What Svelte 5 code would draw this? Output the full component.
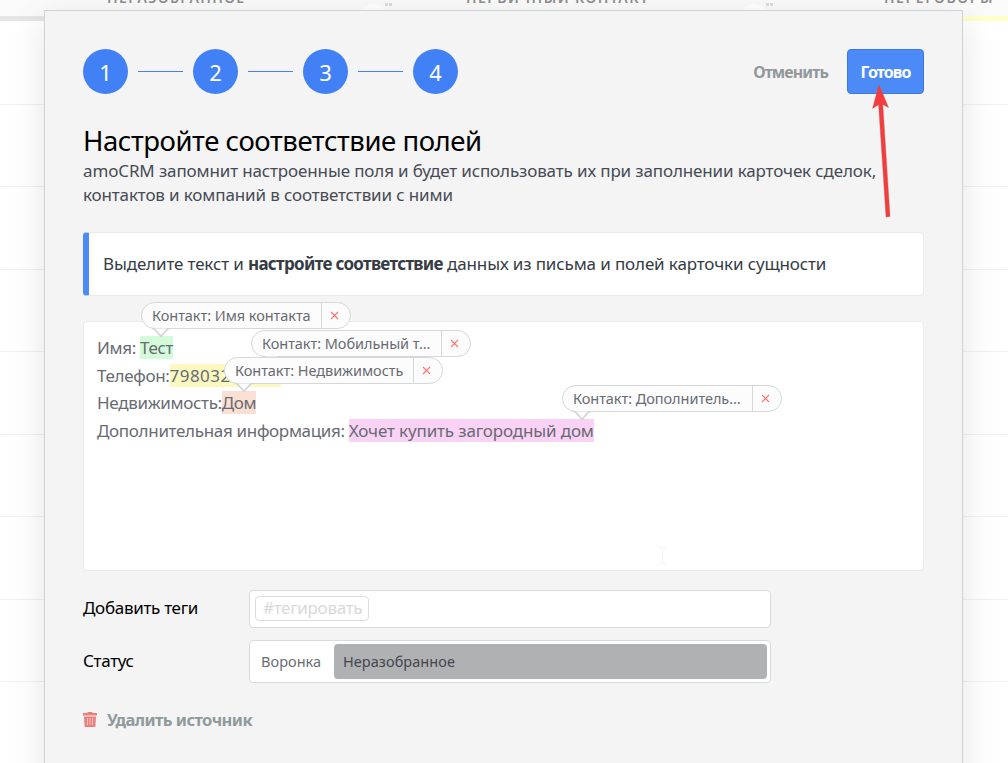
<script>
  const steps = [1, 2, 3, 4];

  const columns = [
    { id: 1, title: 'Неразобранное' },
    { id: 2, title: 'Первичный контакт' },
    { id: 3, title: 'Переговоры' },
  ];

  // Parsed lines of the letter
  const lines = [
    { key: 'name', label: 'Имя:', value: 'Тест' },
    { key: 'phone', label: 'Телефон:', value: '79803212345' },
    { key: 'estate', label: 'Недвижимость:', value: 'Дом' },
    { key: 'extra', label: 'Дополнительная информация:', value: 'Хочет купить загородный дом' },
  ];

  let bubbles = $state([
    { key: 'name', text: 'Контакт: Имя контакта' },
    { key: 'phone', text: 'Контакт: Мобильный т...' },
    { key: 'estate', text: 'Контакт: Недвижимость' },
    { key: 'extra', text: 'Контакт: Дополнитель...' },
  ]);

  function removeBubble(key) {
    bubbles = bubbles.filter((b) => b.key !== key);
  }
</script>

<div class="page">
  <div class="board">
    <div class="board-head">
      {#each columns as column (column.id)}
        <div class="column-title c{column.id}">{column.title}</div>
      {/each}
      <span class="add a1"></span>
      <span class="dots d1"></span>
      <span class="add a2"></span>
      <span class="dots d2"></span>
    </div>
    <div class="board-line"></div>
    <div class="board-body"></div>
  </div>

  <div class="modal">
    <header>
      <div class="steps">
        {#each steps as step}
          {#if step > 1}<span class="dash"></span>{/if}
          <span class="step">{step}</span>
        {/each}
      </div>
      <div class="actions">
        <button class="cancel">Отменить</button>
        <button class="done">Готово</button>
      </div>
    </header>

    <h1>Настройте соответствие полей</h1>
    <p class="description">
      amoCRM запомнит настроенные поля и будет использовать их при заполнении карточек сделок,<br />
      контактов и компаний в соответствии с ними
    </p>

    <div class="info">
      <span>Выделите текст и <b>настройте соответствие</b> данных из письма и полей карточки сущности</span>
    </div>

    <div class="letter">
      {#each lines as line (line.key)}
        <div class="line {line.key}"><span class="label">{line.label}</span><mark>{line.value}</mark></div>
      {/each}
      {#each bubbles as bubble (bubble.key)}
        <div class="bubble b-{bubble.key}">
          <span class="bubble-text">{bubble.text}</span>
          <button class="remove" aria-label="remove" onclick={() => removeBubble(bubble.key)}>
            <svg width="9" height="9" viewBox="0 0 9 9"><path d="M1 1L8 8M8 1L1 8" /></svg>
          </button>
          <svg class="tail" width="20" height="11" viewBox="0 0 20 11"><path d="M1 0.5H3L10 8.5L17 0.5H19" /></svg>
        </div>
      {/each}
      <svg class="caret" width="7" height="17" viewBox="0 0 7 17"><path d="M0 0.5H3M4 0.5H7M3.5 1V16M0 16.5H3M4 16.5H7" /></svg>
    </div>

    <div class="row tags">
      <span class="row-label">Добавить теги</span>
      <div class="field"><span class="tag">#тегировать</span></div>
    </div>
    <div class="row status">
      <span class="row-label">Статус</span>
      <div class="field">
        <span class="funnel">Воронка</span>
        <span class="stage">Неразобранное</span>
      </div>
    </div>

    <button class="delete">
      <svg width="14" height="15" viewBox="0 0 14 15">
        <path class="can" d="M4.5 0H9.5V1H14V3.5H0V1H4.5ZM1 4.5H13L12.3 15H1.7Z" />
        <path class="ribs" d="M4.5 6V13M7 6V13M9.5 6V13" />
      </svg>
      <span>Удалить источник</span>
    </button>
  </div>

  <svg class="arrow" width="20" height="136" viewBox="0 0 20 136">
    <path d="M8 0.5L17.5 23.5L11.8 20.5L19 132.5L15 133L7.6 20.8L1.5 24.5Z" />
  </svg>
</div>

<style>
  :global(body) {
    margin: 0;
    overflow: hidden;
  }

  .page {
    position: relative;
    display: flex;
    width: 1008px;
    height: 763px;
    overflow: hidden;
    background: #fff;
    font-family: 'Noto Sans', sans-serif;
    font-size: 17px;
    color: #363b44;
  }

  button {
    padding: 0;
    border: none;
    background: none;
    font: inherit;
    cursor: pointer;
  }

  /* board under the modal */
  .board {
    position: absolute;
    inset: 0;
  }

  .board-head {
    position: relative;
    height: 16px;
    background: #fafafa;
    overflow: hidden;
  }

  .column-title {
    position: absolute;
    top: -12px;
    font-size: 14px;
    line-height: 20px;
    font-weight: 600;
    text-transform: uppercase;
    white-space: nowrap;
    color: #8e8e8e;
  }

  .c1 { left: 107px; letter-spacing: 1.35px; }
  .c2 { left: 466px; letter-spacing: 1.45px; }
  .c3 { left: 884px; letter-spacing: 1.6px; }

  .add {
    position: absolute;
    top: 4px;
    width: 26px;
    height: 26px;
    border-radius: 50%;
    background: #fff;
  }

  .a1 { left: 360px; }
  .a2 { left: 741px; }

  .dots {
    position: absolute;
    top: 3px;
    width: 3px;
    height: 3px;
    background: #dcdcdc;
    box-shadow: 4px 0 #dcdcdc;
  }

  .d1 { left: 385px; }
  .d2 { left: 766px; }

  .board-line {
    height: 5px;
    background: linear-gradient(90deg, #e5e5e5 500px, #ffffcc 500px);
  }

  .board-body {
    height: 742px;
    background: repeating-linear-gradient(#fff 0 81.5px, #f0f2f2 81.5px 82.5px);
    background-position: 0 1px;
  }

  .modal {
    position: relative;
    box-sizing: border-box;
    flex: none;
    width: 919px;
    height: 800px;
    margin: 10px 0 0 44px;
    padding: 38px;
    border: 1px solid #d0d3d4;
    background: #f4f4f4;
    box-shadow: 0 10px 34px rgba(0, 0, 0, 0.11);
  }

  header {
    display: flex;
    justify-content: space-between;
    height: 45px;
  }

  .steps {
    display: flex;
    align-items: center;
    gap: 10px;
  }

  .step {
    box-sizing: border-box;
    width: 45px;
    height: 45px;
    padding-top: 1px;
    border-radius: 50%;
    background: #4281f5;
    color: #fff;
    font-size: 22px;
    line-height: 45px;
    text-align: center;
  }

  .dash {
    width: 45px;
    height: 1px;
    background: #4281f5;
  }

  .actions {
    display: flex;
    gap: 19px;
  }

  .actions button {
    font-size: 16px;
    font-weight: 700;
    letter-spacing: -0.9px;
  }

  .cancel {
    color: #92989b;
  }

  .actions .done {
    width: 77px;
    height: 45px;
    border: 1px solid #3c79e2;
    border-radius: 4px;
    background: #4c8bf7;
    color: #fff;
  }

  h1 {
    margin: 28px 0 1px;
    font-size: 27.5px;
    line-height: 37px;
    height: 36px;
    font-weight: 400;
    letter-spacing: -0.44px;
    color: #000;
  }

  .description {
    margin: 0;
    line-height: 24px;
    letter-spacing: -0.135px;
    white-space: nowrap;
    color: #474b54;
  }

  .info {
    display: flex;
    align-items: center;
    box-sizing: border-box;
    height: 64px;
    margin-top: 25px;
    padding: 0 0 1px 14px;
    border: 1px solid #e8eaeb;
    border-left: 6px solid #4c8bf7;
    border-radius: 4px;
    background: #fff;
    letter-spacing: -0.13px;
    white-space: nowrap;
  }

  .info b {
    font-weight: 700;
    letter-spacing: -0.69px;
  }

  .letter {
    position: relative;
    box-sizing: border-box;
    height: 250px;
    margin-top: 25px;
    padding: 12px 13px;
    border: 1px solid #e8eaeb;
    border-radius: 4px;
    background: #fff;
    color: #686b72;
  }

  .line {
    line-height: 27.5px;
    white-space: nowrap;
    letter-spacing: -0.32px;
  }

  mark {
    color: inherit;
  }

  .name .label { margin-right: 4px; }
  .extra .label { margin-right: 4px; }
  .name mark { background: #d3fbda; }
  .phone mark { background: #fbf8c0; letter-spacing: 0.45px; }
  .estate mark { background: #fbdfd3; }
  .extra mark { background: #fad2f5; letter-spacing: -0.14px; }

  .bubble {
    position: absolute;
    display: flex;
    box-sizing: border-box;
    width: 220px;
    height: 27px;
    border: 1px solid #d5d7d8;
    border-radius: 14px;
    background: #fcfcfc;
    font-size: 14.5px;
    line-height: 25px;
    letter-spacing: -0.05px;
    white-space: nowrap;
  }

  .b-name { left: 57px; top: -20px; width: 210px; }
  .b-phone { left: 167px; top: 8px; }
  .b-estate { left: 140px; top: 35px; width: 219px; }
  .b-extra { left: 478px; top: 63px; }

  .bubble-text {
    flex: 1;
    padding-left: 10px;
  }

  .remove {
    display: flex;
    align-items: center;
    width: 29px;
    border-left: 1px solid #d5d7d8;
    padding-left: 8px;
  }

  .remove path {
    stroke: #fa7570;
    stroke-width: 1.1;
  }

  .tail {
    position: absolute;
    left: 9px;
    top: 25px;
  }

  .tail path {
    fill: #fcfcfc;
    stroke: #d3d5d6;
    stroke-width: 1.8;
  }

  .caret {
    position: absolute;
    left: 575px;
    top: 225px;
  }

  .caret path {
    fill: none;
    stroke: #f0f0f0;
  }

  .row {
    display: flex;
    align-items: center;
    color: #000;
    letter-spacing: -0.3px;
  }

  .row-label {
    width: 166px;
    padding-bottom: 3px;
  }

  .field {
    display: flex;
    align-items: center;
    box-sizing: border-box;
    width: 522px;
    border: 1px solid #d8dadb;
    border-radius: 4px;
    background: #fff;
  }

  .tags {
    margin-top: 19px;
  }

  .tags .field {
    height: 38px;
    padding: 0 0 1px 5px;
  }

  .tag {
    box-sizing: border-box;
    width: 114px;
    height: 25px;
    padding-left: 7px;
    border: 1px solid #dcdee0;
    border-radius: 4px;
    line-height: 22px;
    color: #d8dadb;
  }

  .status {
    margin-top: 12px;
  }

  .status .row-label {
    padding-bottom: 2px;
  }

  .status .field {
    height: 43px;
    padding-right: 3px;
    font-size: 14.5px;
    letter-spacing: 0.05px;
  }

  .funnel {
    width: 73px;
    padding: 0 0 2px 11px;
    color: #6b6d72;
  }

  .stage {
    flex: 1;
    height: 35px;
    padding-left: 9px;
    border-radius: 4px;
    background: #b0b1b3;
    line-height: 35px;
    color: #44464d;
  }

  .delete {
    display: flex;
    align-items: center;
    gap: 10px;
    margin-top: 25px;
    color: #8f9a9d;
    font-size: 16.5px;
    font-weight: 700;
    letter-spacing: -0.55px;
  }

  .can {
    fill: #ea7f7c;
  }

  .ribs {
    stroke: #f6c4c2;
    stroke-width: 1;
  }

  .arrow {
    position: absolute;
    left: 871px;
    top: 84px;
  }

  .arrow path {
    fill: #f53b3b;
    stroke: #b9605f;
    stroke-width: 0.4;
  }
</style>
